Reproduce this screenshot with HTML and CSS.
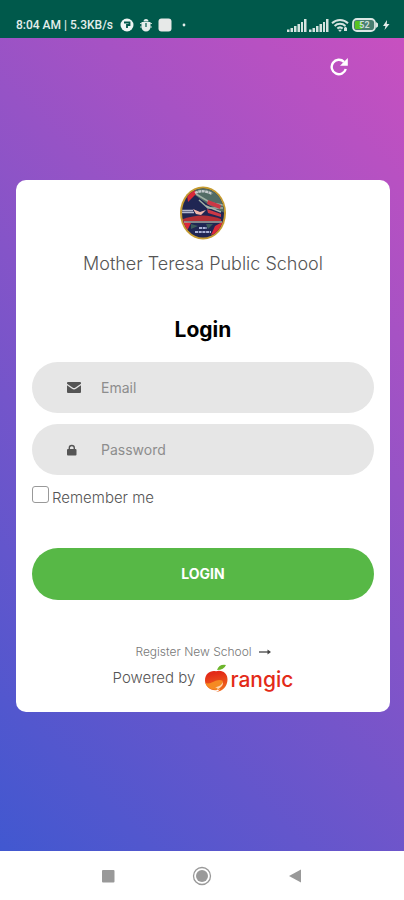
FILE: index.html
```html
<!DOCTYPE html>
<html lang="en">
<head>
<meta charset="utf-8">
<meta name="viewport" content="width=device-width, initial-scale=1">
<title>Login</title>
<link rel="stylesheet" href="styles.css">
</head>
<body>
<header class="status">
  <div class="status-left">
    <span class="clock">8:04 AM | 5.3KB/s</span>
    <svg width="14" height="14" viewBox="0 0 14 14"><circle cx="7" cy="7" r="6.5" fill="#eef5f3"/><path d="M4 4.500h5.500v2.500H7v3" fill="none" stroke="#00594b" stroke-width="1.800"/></svg>
    <svg class="bug" width="12" height="14" viewBox="0 0 12 14"><path d="M3.500 3.500a2.500 2.500 0 0 1 5 0zM1.500 4h9v5a4.500 4.500 0 0 1-9 0z" fill="#e4eeeb"/><path d="M0 5.500h2M0 9h2M10 5.500h2M10 9h2" stroke="#b9d2cc"/><path d="M6 5v4" stroke="#00594b" stroke-width="1.200"/></svg>
    <svg width="14" height="14" viewBox="0 0 14 14"><rect x="0.5" y="0.5" width="13" height="13" rx="3" fill="#e7e9e8"/></svg>
    <svg class="dot" width="4" height="4" viewBox="0 0 4 4"><circle cx="2" cy="2" r="1.400" fill="#e4eeeb"/></svg>
  </div>
  <div class="status-right">
    <svg width="20" height="13" viewBox="0 0 20 13" fill="#d5e4e0"><path d="M0 10.500h2.500V13H0zM3.500 9H6v4H3.500zM7 7h2.500v6H7zM10.500 5H13v8h-2.500zM14 3h2v10h-2zM17 0h2.500v13H17z"/></svg>
    <svg width="20" height="13" viewBox="0 0 20 13" fill="#d5e4e0"><path d="M0 10.500h2.500V13H0zM3.500 9H6v4H3.500zM7 7h2.500v6H7zM10.500 5H13v8h-2.500zM14 3h2v10h-2zM17 0h2.500v13H17z"/></svg>
    <svg width="18" height="14" viewBox="0 0 18 14"><g fill="none" stroke="#d5e4e0" stroke-width="2"><path d="M1 5.200a11.500 11.500 0 0 1 16 0M3.600 8a7.800 7.800 0 0 1 10.800 0M6.300 10.600a4 4 0 0 1 5.400 0"/></g><path d="M9 14l-2-2.300h4zM13 10l1.500-1.500L16 10v3h-3z" fill="#d5e4e0"/></svg>
    <svg class="battery" width="27" height="14" viewBox="0 0 27 14"><rect x="1" y="1" width="22" height="12" rx="4" fill="#477d70" stroke="#dbe7e4" stroke-width="1.800"/><path d="M4 3h6v8H4q-1 0-1-1V4q0-1 1-1z" fill="#58c322"/><path d="M24 4l2 1.500v3L24 10z" fill="#dbe7e4"/><text x="12.500" y="10" text-anchor="middle" class="battery-text">52</text></svg>
    <svg width="8" height="12" viewBox="0 0 8 12"><path d="M5 1L1 7h2.500L2.500 11 7.500 5H4.800z" fill="#e4eeeb"/></svg>
  </div>
</header>

<main class="page">
  <div class="toolbar">
    <button class="refresh" type="button" aria-label="Refresh">
      <svg width="18" height="18" viewBox="0 0 18 18"><path d="M15.800 11A7.200 7.200 0 1 1 14 3.900" fill="none" stroke="#fff" stroke-width="2.400"/><path d="M17.800 0v7.800H10z" fill="#fff"/></svg>
    </button>
  </div>

  <form class="card">
    <svg class="crest" width="48" height="54" viewBox="0 0 48 54" role="img" aria-label="School crest">
      <defs><clipPath id="crest-clip"><ellipse cx="24" cy="27" rx="21" ry="24.600"/></clipPath></defs>
      <ellipse cx="24" cy="27" rx="23" ry="26.600" fill="#c59b31"/>
      <g clip-path="url(#crest-clip)">
        <path d="M0 0h48v54H0z" fill="#202653"/>
        <path d="M14 0h34v28L31 20 16 9z" fill="#526c65"/>
        <path d="M17 8l15 9 12 2M20 14l9 8h15" fill="none" stroke="#a1b0a5" stroke-width="1.500"/>
        <path d="M8 9l7-6 3 4-9 9zM3 35l9 2-4 8zM32 49l4-9 9-5-3 11z" fill="#db2939"/>
        <path d="M29 14l13 5-1 4-13-5zM28 23l14 5v3l-13-4z" fill="#cc3846"/>
        <path d="M27 20l15 6" stroke="#a9b5ab" stroke-width="1.500"/>
        <path d="M3 24.500h11M3 26.500h12" stroke="#b5b9ce" stroke-width="1.500"/>
        <path d="M14 23l7 3 6-2-5 5-5-1z" fill="#f2b7ab"/>
        <path d="M4 33q20-7 38 0v2H4z" fill="#b52e35"/>
        <path d="M5 36h38" stroke="#a5a99e" stroke-width="1.600"/>
        <path d="M27 38h7l-5 5zM12 38l7 2-7 3z" fill="#3c5c5b"/>
        <path d="M16 7q8-4 17 1" fill="none" stroke="#c5cacd" stroke-width="2.400" stroke-dasharray="3 0.500"/>
        <path d="M20 42h8M16 46h16" stroke="#aab2d6" stroke-width="2" stroke-dasharray="3 0.700"/>
      </g>
    </svg>
    <p class="school">Mother Teresa Public School</p>
    <h1 class="title">Login</h1>

    <label class="field">
      <svg class="field-icon" width="14" height="11" viewBox="0 0 14 11" fill="#555"><path d="M0 1q0-1 1-1h12q1 0 1 1v.7L8.500 5.600q-1.500 1-3 0L0 1.700z"/><path d="M0 3.200l5 3.600q2 1.300 4 0l5-3.600V10q0 1-1 1H1q-1 0-1-1z"/></svg>
      <input class="field-input" type="email" placeholder="Email" aria-label="Email">
    </label>
    <label class="field">
      <svg class="field-icon" width="14" height="12" viewBox="0 0 14 12"><path d="M2.300 5.500V4a2.500 2.500 0 0 1 5 0v1.500" fill="none" stroke="#555" stroke-width="1.400"/><rect y="5" width="9.500" height="6.500" rx="1" fill="#555"/></svg>
      <input class="field-input" type="password" placeholder="Password" aria-label="Password">
    </label>

    <div class="remember">
      <input class="check" type="checkbox" id="remember">
      <label for="remember">Remember me</label>
    </div>

    <button class="submit" type="submit">LOGIN</button>

    <a class="register" href="#">Register New School
      <svg width="12" height="6" viewBox="0 0 12 6"><path d="M0 3h10" stroke="#444" stroke-width="1.300"/><path d="M8.500 0.500L12 3 8.500 5.500z" fill="#444"/></svg>
    </a>
    <div class="powered">
      <span>Powered by</span>
      <span class="brand">
        <svg width="24" height="29" viewBox="0 0 24 29">
          <defs><linearGradient id="fruit" x1="0" y1="0" x2="0.200" y2="1"><stop offset="0.200" stop-color="#e32a18"/><stop offset="1" stop-color="#f06b1d"/></linearGradient></defs>
          <path d="M12 6q2-6 9-5-2 5-9 5z" fill="#6db52c"/>
          <path d="M11 7.300q2-.8 5-.3c4 .8 6.700 4.300 6.500 8.700C22.300 22 18 27.300 11 28q3-1 4-2.800C7 28.500 0 23 0 16.500 0 9.500 5.500 6 11 7.300z" fill="url(#fruit)"/>
          <path d="M.5 19c5 2 9-3 14-3 3 0 4 1 3 3-1 2.500-5 4.500-8 5 2 .3 4.500 0 6-.8-.4 1-.7 1.500-1.500 2C8 27 2 24 .5 19z" fill="#f58a22"/>
          <path d="M10 23.500q6.500-1.500 8-5.500.5 4-4.500 6.800-1 1.300-2 1.500 1-1 1-2.300z" fill="#ffd9b0"/>
        </svg>
        <span class="brand-name">rangic</span>
      </span>
    </div>
  </form>
</main>

<nav class="navbar" aria-label="System">
  <button class="nav-button" type="button" aria-label="Recent apps"><svg width="20" height="20" viewBox="0 0 20 20"><rect x="4" y="4" width="12.500" height="12.500" rx="1" fill="#999"/></svg></button>
  <button class="nav-button" type="button" aria-label="Home"><svg width="20" height="20" viewBox="0 0 20 20"><circle cx="10" cy="10" r="8.500" fill="none" stroke="#999" stroke-width="1.300"/><circle cx="10" cy="10" r="6" fill="#999"/></svg></button>
  <button class="nav-button" type="button" aria-label="Back"><svg width="20" height="20" viewBox="0 0 20 20"><path d="M15 3.500v13L3 10z" fill="#999"/></svg></button>
</nav>
</body>
</html>
```
FILE: styles.css
```css
* {
  box-sizing: border-box;
}

body {
  margin: 0;
  min-height: 100vh;
  display: flex;
  flex-direction: column;
  font-family: Inter, "Liberation Sans", sans-serif;
  color: #555;
}

svg {
  display: block;
  flex: none;
}

button {
  border: 0;
  padding: 0;
  background: none;
  cursor: pointer;
}

.status {
  display: flex;
  justify-content: space-between;
  height: 38px;
  padding: 11px 14px 0 16px;
  background: #00594b;
  color: #e4eeeb;
  font: 500 12px/28px Roboto, sans-serif;
}

.status-left,
.status-right {
  display: flex;
  align-items: center;
  height: 28px;
  gap: 4px;
}

.status-right {
  gap: 2px;
}

.clock {
  margin-right: 3px;
}

.bug {
  margin: 0 2px;
}

.dot {
  margin-left: 6px;
}

.battery {
  margin: 0 1px;
}

.battery-text {
  font: 700 9px Roboto, sans-serif;
  fill: #c9dcd7;
}

.page {
  flex: 1;
  padding: 0 14px 0 16px;
  background: linear-gradient(-135deg, #c850c0, #4158d0);
}

.toolbar {
  display: flex;
  justify-content: flex-end;
  height: 142px;
  padding: 20px 42px 0 0;
}

.refresh {
  height: 18px;
}

.card {
  display: flex;
  flex-direction: column;
  padding: 6px 16px 16px;
  background: #fff;
  border-radius: 10px;
}

.crest {
  align-self: center;
}

.school {
  margin: 12px 0 0;
  text-align: center;
  font-size: 18px;
  font-weight: 300;
  line-height: 24px;
}

.title {
  margin: 40px 0 18px;
  text-align: center;
  font-size: 21px;
  font-weight: 700;
  line-height: 28px;
  color: #000;
}

.field {
  display: flex;
  align-items: center;
  gap: 20px;
  height: 51px;
  margin-bottom: 11px;
  padding: 0 30px 0 35px;
  border-radius: 26px;
  background: #e6e6e6;
}

.field-input {
  flex: 1;
  min-width: 0;
  border: 0;
  padding: 0;
  outline: 0;
  background: none;
  color: #555;
  font: 400 14px/20px Inter, sans-serif;
}

.field-input::placeholder {
  color: #8d8d8d;
  opacity: 1;
}

.remember {
  display: flex;
  gap: 3px;
  font-size: 15px;
  font-weight: 300;
  line-height: 24px;
}

.check {
  appearance: none;
  width: 17px;
  height: 17px;
  margin: 0;
  border: 1px solid #999;
  border-radius: 3px;
  background: #fff;
}

.check:checked {
  background: #57b846;
}

.submit {
  height: 52px;
  margin-top: 38px;
  border-radius: 26px;
  background: #57b846;
  color: #fff;
  font: 700 14px/20px Inter, sans-serif;
}

.register {
  display: flex;
  justify-content: center;
  align-items: center;
  gap: 7px;
  margin-top: 44px;
  color: #777;
  font-size: 12px;
  font-weight: 300;
  line-height: 16px;
  text-decoration: none;
}

.powered {
  display: flex;
  justify-content: center;
  gap: 10px;
  margin-top: 4px;
  font-size: 15px;
  font-weight: 300;
  line-height: 28px;
}

.brand {
  display: flex;
  gap: 1px;
}

.brand-name {
  font-size: 21px;
  font-weight: 500;
  line-height: 32px;
  color: #e32a18;
}

.navbar {
  display: flex;
  justify-content: center;
  align-items: center;
  gap: 74px;
  height: 49px;
  background: #fff;
}
```
